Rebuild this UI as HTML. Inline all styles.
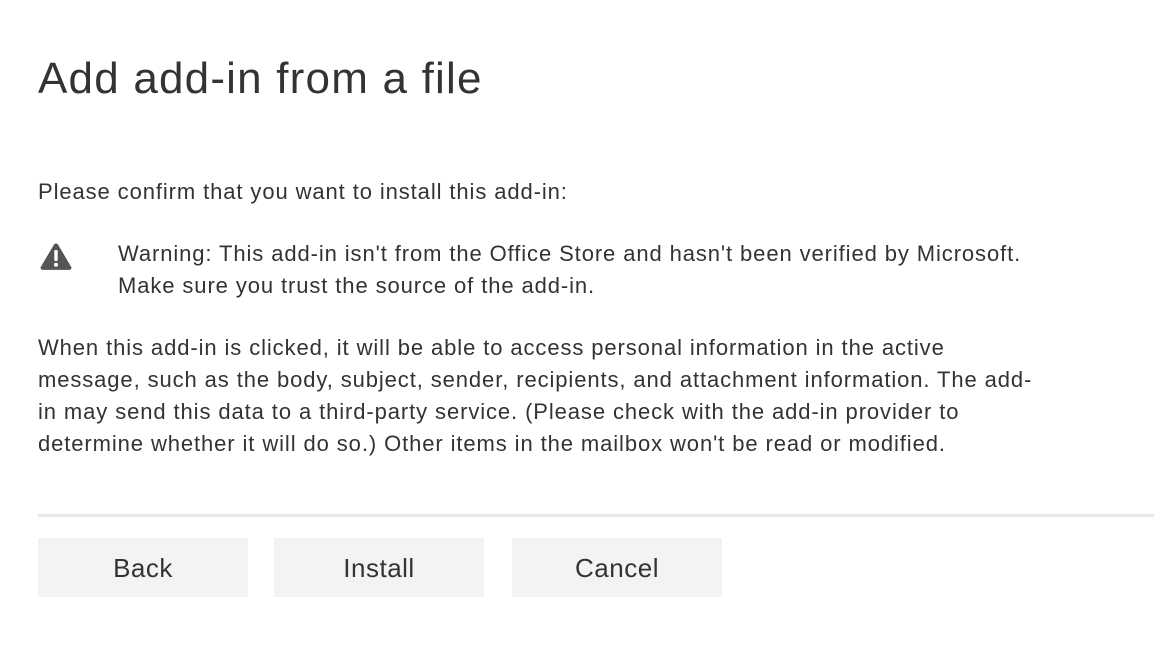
<!DOCTYPE html>
<html><head><meta charset="utf-8"><style>
body{margin:0;width:1154px;height:656px;background:#fff;font-family:"Liberation Sans",sans-serif;color:#333;position:relative;overflow:hidden}
.a{position:absolute;white-space:nowrap}
h1{position:absolute;left:38px;top:54px;margin:0;font-weight:300;font-size:44px;color:#333;letter-spacing:1.2px}
.t{font-size:22px;line-height:32px;letter-spacing:0.9px}
.btn{position:absolute;top:538px;width:210px;height:59px;background:#f3f3f3;font-size:26px;text-align:center;line-height:61px;color:#333;letter-spacing:0.5px}
</style></head><body>
<h1>Add add-in from a file</h1>
<div class="a t" style="left:38px;top:176px">Please confirm that you want to install this add-in:</div>
<svg class="a" style="left:39px;top:242px" width="34" height="28" viewBox="0 0 34 28"><path d="M17 1.5c1 0 1.7.5 2.2 1.4l13 22c.8 1.4-.2 3-1.8 3H3.6c-1.6 0-2.6-1.6-1.8-3l13-22c.5-.9 1.2-1.4 2.2-1.4z" fill="#555"/><rect x="15.3" y="8" width="3.4" height="11" rx="1" fill="#fff"/><circle cx="17" cy="22.7" r="2" fill="#fff"/></svg>
<div class="a t" style="left:118px;top:238px">Warning: This add-in isn't from the Office Store and hasn't been verified by Microsoft.<br>Make sure you trust the source of the add-in.</div>
<div class="a t" style="left:38px;top:332px">When this add-in is clicked, it will be able to access personal information in the active<br>message, such as the body, subject, sender, recipients, and attachment information. The add-<br>in may send this data to a third-party service. (Please check with the add-in provider to<br>determine whether it will do so.) Other items in the mailbox won't be read or modified.</div>
<div class="a" style="left:38px;top:514px;width:1116px;height:3px;background:#e8e8e8"></div>
<div class="btn" style="left:38px">Back</div>
<div class="btn" style="left:274px">Install</div>
<div class="btn" style="left:512px">Cancel</div>
</body></html>
